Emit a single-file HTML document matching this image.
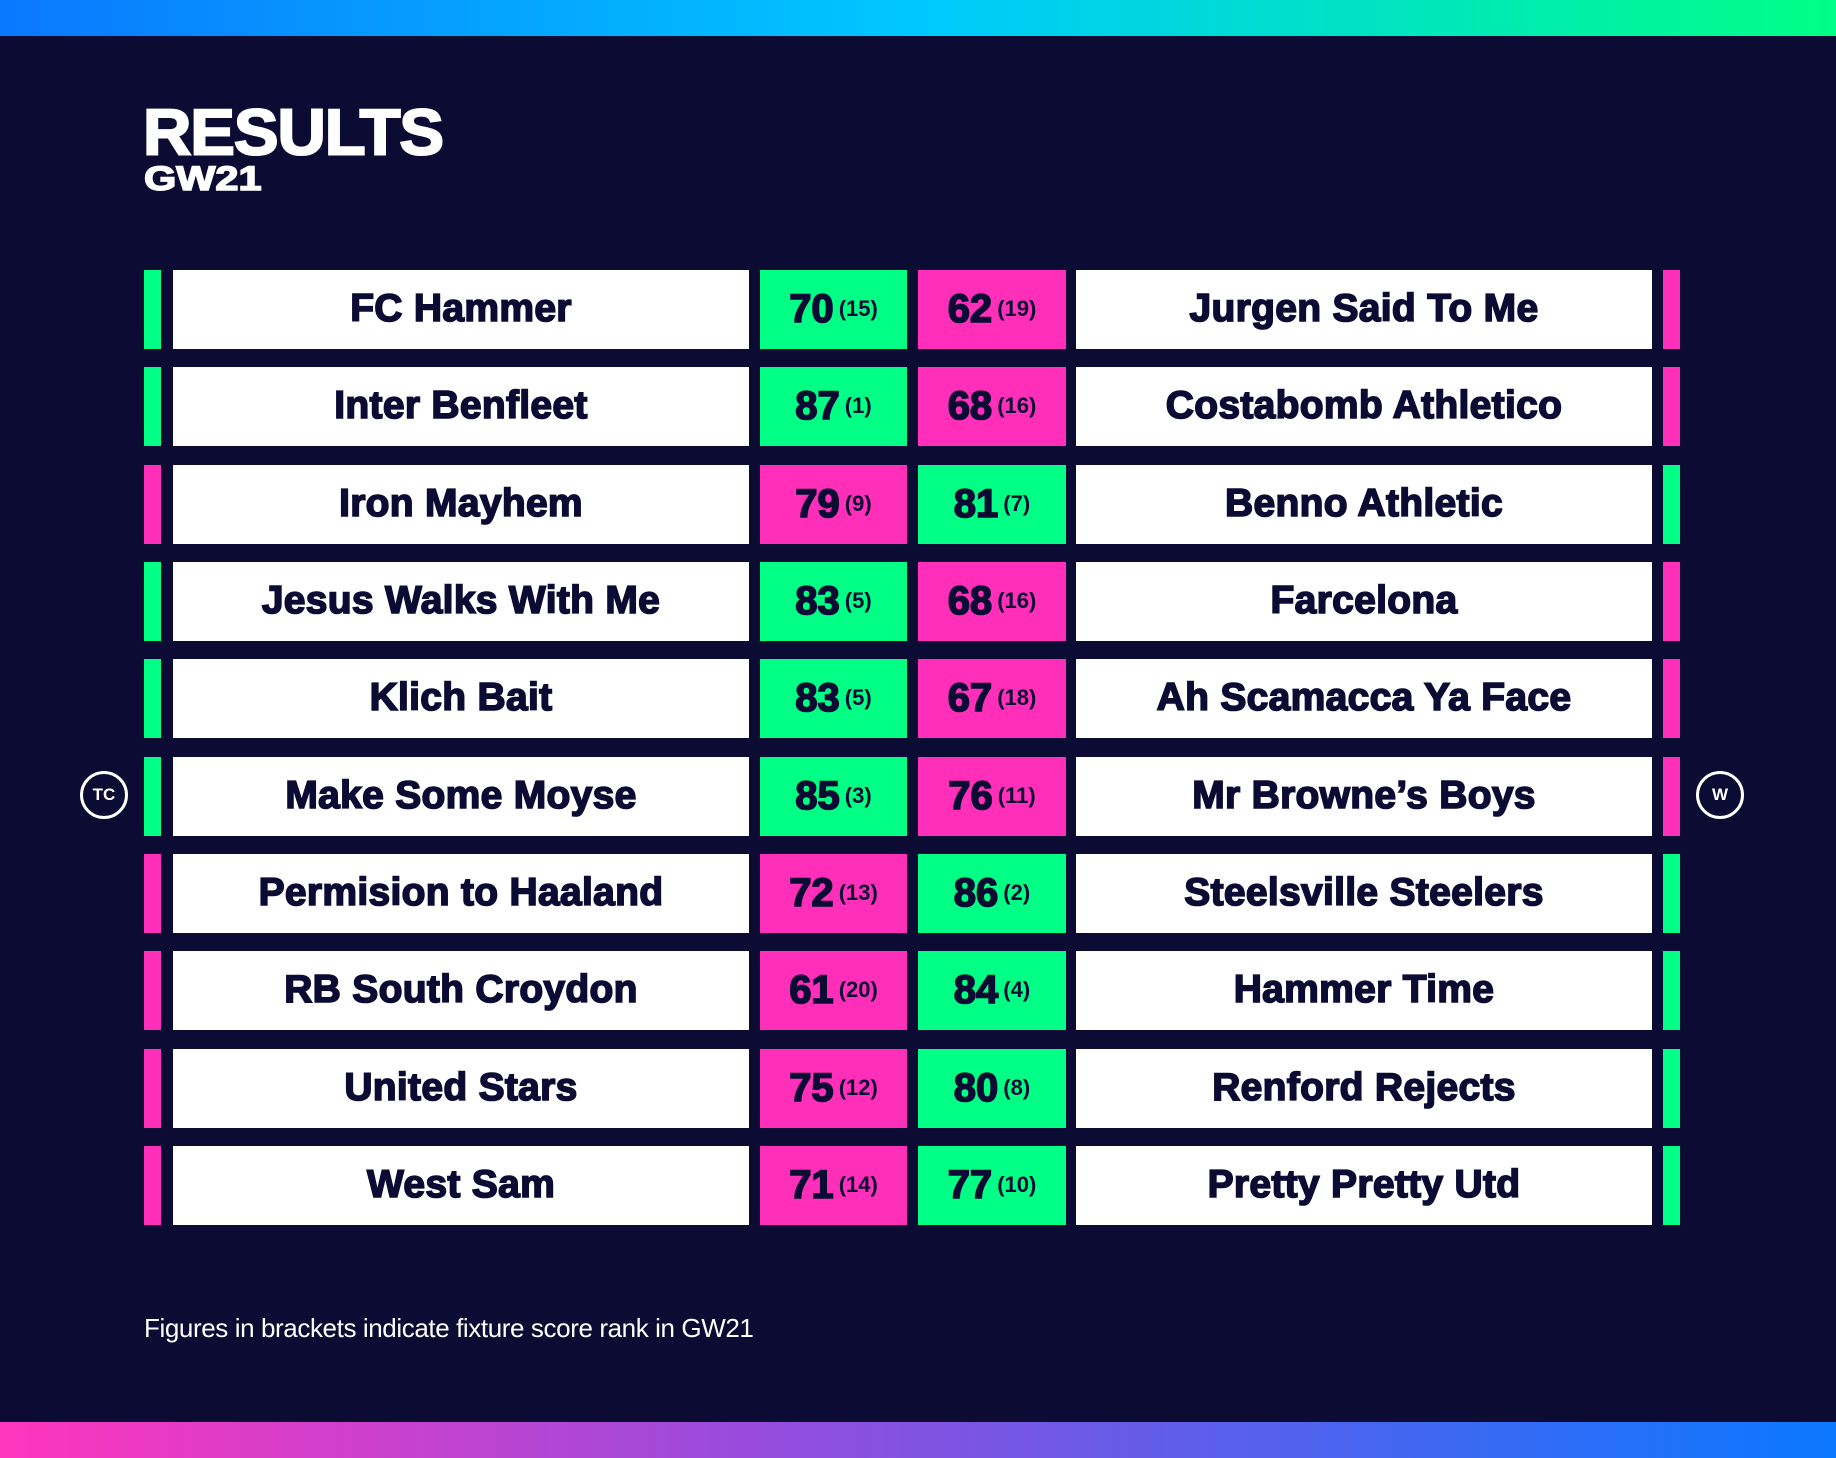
<!DOCTYPE html>
<html><head><meta charset="utf-8"><style>
*{margin:0;padding:0;box-sizing:border-box}
body{width:1836px;height:1458px;background:#0b0b33;position:relative;overflow:hidden;font-family:"Liberation Sans",Arial,sans-serif;color:#0b0b33}
.top{position:absolute;left:0;top:0;width:1836px;height:36px;background:linear-gradient(90deg,#0a78ff 0%,#00c8ff 50%,#00ff85 100%)}
.bot{position:absolute;left:0;top:1422px;width:1836px;height:36px;background:linear-gradient(90deg,#ff35bd 0%,#9a4bdc 40%,#0a78ff 100%)}
h1{position:absolute;left:143px;top:101px;font-size:62px;line-height:62px;font-weight:900;color:#fff;letter-spacing:-1px;transform:scale(1.08,1.05);transform-origin:left top;-webkit-text-stroke:2px #fff}
h2{position:absolute;left:144px;top:162px;font-size:34px;line-height:34px;font-weight:900;color:#fff;letter-spacing:0px;transform:scaleX(1.22);transform-origin:left top;-webkit-text-stroke:1.5px #fff}
.row{position:absolute;left:0;width:1836px;height:79px}
.s{position:absolute;top:0;height:79px;width:17px}
.n{position:absolute;top:0;height:79px;background:#fff;font-weight:bold;font-size:39px;line-height:77px;text-align:center;white-space:nowrap;-webkit-text-stroke:1.6px #0b0b33;letter-spacing:0.3px}
.sc{position:absolute;top:0;height:79px;font-weight:bold;line-height:77px;text-align:center;white-space:nowrap}
.sc b{font-size:40px;letter-spacing:0;-webkit-text-stroke:1.6px #0b0b33}
.sc i{font-style:normal;font-size:22px;font-weight:bold;vertical-align:6px;margin-left:5px}
.g{background:#00ff85}.p{background:#ff2fb9}
.l1{left:144px}.l2{left:173px;width:576px}.l3{left:760px;width:147px}.l4{left:918px;width:148px}.l5{left:1076px;width:576px}.l6{left:1663px}
.c{position:absolute;width:48px;height:48px;border:3px solid #fff;border-radius:50%;color:#fff;font-size:17px;font-weight:bold;text-align:center;line-height:42px}
.f{position:absolute;left:144px;top:1313px;font-size:26px;color:#fff;letter-spacing:-0.4px}
</style></head><body>
<div class="top"></div>
<h1>RESULTS</h1>
<h2>GW21</h2>

<div class="row" style="top:270px"><div class="s l1 g"></div><div class="n l2">FC Hammer</div><div class="sc l3 g"><b>70</b><i>(15)</i></div><div class="sc l4 p"><b>62</b><i>(19)</i></div><div class="n l5">Jurgen Said To Me</div><div class="s l6 p"></div></div>
<div class="row" style="top:367px"><div class="s l1 g"></div><div class="n l2">Inter Benfleet</div><div class="sc l3 g"><b>87</b><i>(1)</i></div><div class="sc l4 p"><b>68</b><i>(16)</i></div><div class="n l5">Costabomb Athletico</div><div class="s l6 p"></div></div>
<div class="row" style="top:465px"><div class="s l1 p"></div><div class="n l2">Iron Mayhem</div><div class="sc l3 p"><b>79</b><i>(9)</i></div><div class="sc l4 g"><b>81</b><i>(7)</i></div><div class="n l5">Benno Athletic</div><div class="s l6 g"></div></div>
<div class="row" style="top:562px"><div class="s l1 g"></div><div class="n l2">Jesus Walks With Me</div><div class="sc l3 g"><b>83</b><i>(5)</i></div><div class="sc l4 p"><b>68</b><i>(16)</i></div><div class="n l5">Farcelona</div><div class="s l6 p"></div></div>
<div class="row" style="top:659px"><div class="s l1 g"></div><div class="n l2">Klich Bait</div><div class="sc l3 g"><b>83</b><i>(5)</i></div><div class="sc l4 p"><b>67</b><i>(18)</i></div><div class="n l5">Ah Scamacca Ya Face</div><div class="s l6 p"></div></div>
<div class="row" style="top:757px"><div class="s l1 g"></div><div class="n l2">Make Some Moyse</div><div class="sc l3 g"><b>85</b><i>(3)</i></div><div class="sc l4 p"><b>76</b><i>(11)</i></div><div class="n l5">Mr Browne’s Boys</div><div class="s l6 p"></div></div>
<div class="row" style="top:854px"><div class="s l1 p"></div><div class="n l2">Permision to Haaland</div><div class="sc l3 p"><b>72</b><i>(13)</i></div><div class="sc l4 g"><b>86</b><i>(2)</i></div><div class="n l5">Steelsville Steelers</div><div class="s l6 g"></div></div>
<div class="row" style="top:951px"><div class="s l1 p"></div><div class="n l2">RB South Croydon</div><div class="sc l3 p"><b>61</b><i>(20)</i></div><div class="sc l4 g"><b>84</b><i>(4)</i></div><div class="n l5">Hammer Time</div><div class="s l6 g"></div></div>
<div class="row" style="top:1049px"><div class="s l1 p"></div><div class="n l2">United Stars</div><div class="sc l3 p"><b>75</b><i>(12)</i></div><div class="sc l4 g"><b>80</b><i>(8)</i></div><div class="n l5">Renford Rejects</div><div class="s l6 g"></div></div>
<div class="row" style="top:1146px"><div class="s l1 p"></div><div class="n l2">West Sam</div><div class="sc l3 p"><b>71</b><i>(14)</i></div><div class="sc l4 g"><b>77</b><i>(10)</i></div><div class="n l5">Pretty Pretty Utd</div><div class="s l6 g"></div></div>

<div class="c" style="left:80px;top:771px">TC</div>
<div class="c" style="left:1696px;top:771px">W</div>
<div class="f">Figures in brackets indicate fixture score rank in GW21</div>
<div class="bot"></div>
</body></html>
